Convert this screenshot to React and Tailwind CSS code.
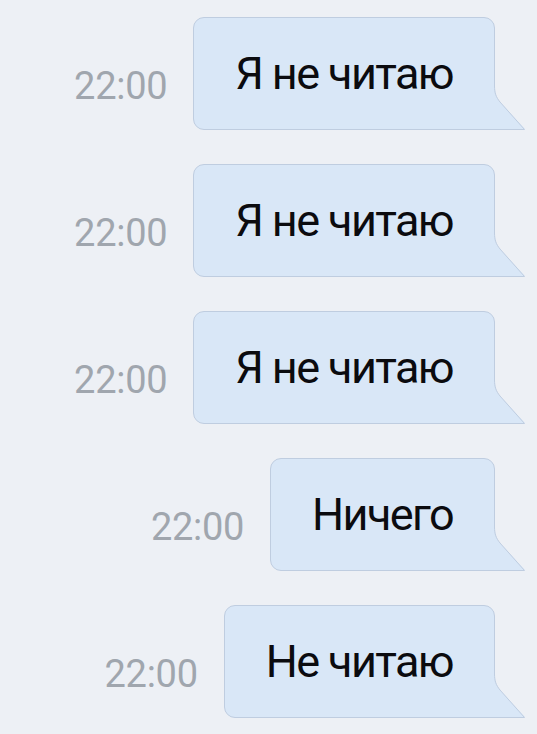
import React from 'react';

const messages = [
  { time: '22:00', text: 'Я не читаю' },
  { time: '22:00', text: 'Я не читаю' },
  { time: '22:00', text: 'Я не читаю' },
  { time: '22:00', text: 'Ничего' },
  { time: '22:00', text: 'Не читаю' },
];

function Bubble({ text }) {
  return (
    <div className="relative">
      <div className="h-[113px] flex items-center px-[41px] bg-[#d9e7f7] border border-[#bfcde0] rounded-[11px] rounded-br-none">
        <span className="text-[45px] leading-none text-[#0b0b0f] tracking-[-1.6px]">{text}</span>
      </div>
      {/* tail */}
      <svg
        className="absolute bottom-0 left-[calc(100%-1px)]"
        width="32"
        height="44"
        viewBox="0 0 32 44"
      >
        <path d="M0 0 L1 0 C1 7 2 11 6 16 L31 43 L0 43 Z" fill="#d9e7f7" />
        <path
          d="M0.5 0 C0.5 7 2 11 6 16 L30.5 43.5 L0 43.5"
          fill="none"
          stroke="#bfcde0"
          strokeWidth="1"
        />
      </svg>
    </div>
  );
}

export default function App() {
  return (
    <div className="min-h-[734px] w-full bg-[#edf0f5] pt-[17px] pr-[42px] flex flex-col gap-[34px]" style={{ fontFamily: 'Roboto, "Noto Sans", sans-serif' }}>
      {messages.map((m, i) => (
        <div key={i} className="flex justify-end items-center gap-[26px]">
          <span className="text-[38px] leading-none text-[#a0a6ae] tracking-[-0.3px] mt-[24px]">{m.time}</span>
          <Bubble text={m.text} />
        </div>
      ))}
    </div>
  );
}
